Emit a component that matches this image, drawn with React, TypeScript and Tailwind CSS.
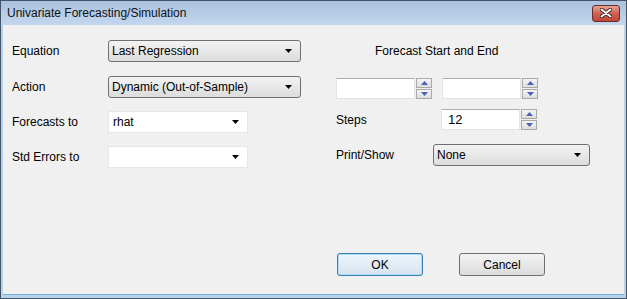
import React from 'react';

const font = { fontFamily: '"Liberation Sans", Arial, sans-serif' };

function Arrow() {
  return (
    <svg width="7" height="4" viewBox="0 0 7 4">
      <path d="M0 0H7L3.5 4Z" fill="#000" />
    </svg>
  );
}

function SpinArrows() {
  return (
    <div className="flex flex-col gap-[1px]">
      <div className="flex h-[10px] w-[16px] items-center justify-center border border-[#a9a9a9] bg-linear-to-b from-[#f4f4f4] to-[#dedede]">
        <svg width="7" height="4" viewBox="0 0 7 4">
          <path d="M3.5 0L7 4H0Z" fill="#4d61b8" />
        </svg>
      </div>
      <div className="flex h-[10px] w-[16px] items-center justify-center border border-[#a9a9a9] bg-linear-to-b from-[#f4f4f4] to-[#dedede]">
        <svg width="7" height="4" viewBox="0 0 7 4">
          <path d="M0 0H7L3.5 4Z" fill="#4d61b8" />
        </svg>
      </div>
    </div>
  );
}

function SpinEdit({ value = '' }: { value?: string }) {
  return (
    <div className="flex items-start gap-[1px]">
      <div className="flex h-[21px] w-[79px] items-center border border-[#e2e3ea] border-t-[#abadb3] bg-white pl-[6px] text-[13px]">
        {value}
      </div>
      <SpinArrows />
    </div>
  );
}

function ButtonCombo({ text, width }: { text: string; width: string }) {
  return (
    <div
      className={`flex h-[22px] ${width} items-center justify-between rounded-[3px] border border-[#707070] bg-linear-to-b from-[#f3f3f3] to-[#dcdcdc] pl-[3px] pr-[8px]`}
    >
      <span>{text}</span>
      <Arrow />
    </div>
  );
}

function EditCombo({ text = '' }: { text?: string }) {
  return (
    <div className="flex h-[22px] w-[140px] items-center justify-between border border-[#e6e6e6] bg-white pl-[4px] pr-[8px]">
      <span>{text}</span>
      <Arrow />
    </div>
  );
}

export default function App() {
  return (
    <div
      className="flex h-[299px] w-[627px] flex-col border border-[#445468] bg-[#b9d1ea] text-[12px] text-black"
      style={font}
    >
      {/* title bar */}
      <div className="flex h-[24px] items-center justify-between bg-linear-to-b from-[#a9c2df] to-[#c3d7ee] pl-[6px] pr-[6px]">
        <span className="text-[12px] text-[#111]">Univariate Forecasting/Simulation</span>
        <div className="flex h-[17px] w-[28px] items-center justify-center rounded-[3px] border border-[#6e2b24] bg-linear-to-b from-[#e4a294] via-[#cc6352] to-[#c0463a]">
          <svg width="12" height="10" viewBox="0 0 12 10">
            <path d="M1.5 1.5L10.5 8.5M10.5 1.5L1.5 8.5" stroke="#3a1a16" strokeWidth="3.6" strokeLinecap="round" />
            <path d="M1.5 1.5L10.5 8.5M10.5 1.5L1.5 8.5" stroke="#fff" strokeWidth="2" strokeLinecap="round" />
          </svg>
        </div>
      </div>

      {/* body */}
      <div className="mx-[2px] mb-[3px] flex flex-1 flex-col border-b border-[#6fb3dc] bg-[#f0f0f0]">
        <div className="flex pl-[9px] pt-[15px]">
          {/* left column */}
          <div className="flex flex-col">
            <div className="flex items-center">
              <span className="w-[96px]">Equation</span>
              <ButtonCombo text="Last Regression" width="w-[193px]" />
            </div>
            <div className="mt-[14px] flex items-center">
              <span className="w-[96px]">Action</span>
              <ButtonCombo text="Dynamic (Out-of-Sample)" width="w-[193px]" />
            </div>
            <div className="mt-[13px] flex items-center">
              <span className="w-[96px]">Forecasts to</span>
              <EditCombo text="rhat" />
            </div>
            <div className="mt-[13px] flex items-center">
              <span className="w-[96px]">Std Errors to</span>
              <EditCombo />
            </div>
          </div>

          {/* right column */}
          <div className="ml-[35px] flex flex-col">
            <div className="flex h-[22px] items-center pl-[39px]">Forecast Start and End</div>
            <div className="mt-[16px] flex items-start gap-[10px]">
              <SpinEdit />
              <SpinEdit />
            </div>
            <div className="mt-[10px] flex items-center">
              <span className="w-[105px]">Steps</span>
              <SpinEdit value="12" />
            </div>
            <div className="mt-[14px] flex items-center">
              <span className="w-[97px]">Print/Show</span>
              <ButtonCombo text="None" width="w-[157px]" />
            </div>
          </div>
        </div>

        {/* buttons */}
        <div className="mt-auto mb-[18px] flex gap-[36px] pl-[334px]">
          <div className="flex h-[23px] w-[86px] items-center justify-center rounded-[3px] border border-[#3c7fb1] bg-linear-to-b from-[#eef6fc] to-[#d6e3ee] shadow-[inset_0_0_0_1px_#a8dcf7]">
            OK
          </div>
          <div className="flex h-[23px] w-[86px] items-center justify-center rounded-[3px] border border-[#707070] bg-linear-to-b from-[#f3f3f3] to-[#dcdcdc]">
            Cancel
          </div>
        </div>
      </div>
    </div>
  );
}
